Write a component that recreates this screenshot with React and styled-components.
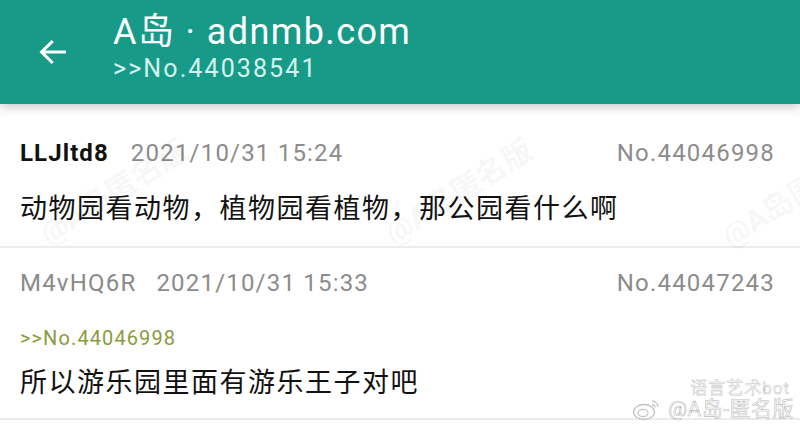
import React from "react";
import styled, { createGlobalStyle } from "styled-components";

const GlobalStyle = createGlobalStyle`
  html, body {
    margin: 0;
    padding: 0;
    background: #ffffff;
  }
  body {
    font-family: Roboto, "Noto Sans CJK SC", sans-serif;
    overflow: hidden;
  }
`;

const posts = [
  {
    id: "44046998",
    user: "LLJltd8",
    bold: true,
    time: "2021/10/31 15:24",
    text: "动物园看动物，植物园看植物，那公园看什么啊",
  },
  {
    id: "44047243",
    user: "M4vHQ6R",
    bold: false,
    time: "2021/10/31 15:33",
    quote: "44046998",
    text: "所以游乐园里面有游乐王子对吧",
  },
];

const marks = [
  { left: 30, top: 215 },
  { left: 375, top: 215 },
  { left: 712, top: 218 },
];

function App() {
  return (
    <Page>
      <GlobalStyle />
      <TopBar>
        <BackButton>
          <svg width="34" height="34" viewBox="0 0 24 24" fill="none">
            <path
              d="M20 12H4.5M11 5l-7 7 7 7"
              stroke="#ffffff"
              strokeWidth="2.2"
              strokeLinecap="square"
            />
          </svg>
        </BackButton>
        <TitleBlock>
          <Title>A岛 · adnmb.com</Title>
          <Subtitle>&gt;&gt;No.44038541</Subtitle>
        </TitleBlock>
      </TopBar>
      <List>
        {posts.map((p) => (
          <Post key={p.id} $tall={!!p.quote}>
            <Meta>
              <User $bold={p.bold}>{p.user}</User>
              <Time>{p.time}</Time>
              <PostNo>No.{p.id}</PostNo>
            </Meta>
            {p.quote && <Quote>&gt;&gt;No.{p.quote}</Quote>}
            <Content $gap={p.quote ? 16 : 23}>{p.text}</Content>
          </Post>
        ))}
      </List>
      {marks.map((m, i) => (
        <Watermark key={i} style={{ left: m.left, top: m.top }}>
          @A岛匿名版
        </Watermark>
      ))}
      <Stamp>
        <StampSmall>语言艺术bot</StampSmall>
        <StampRow>
          <svg width="30" height="24" viewBox="0 0 30 24" fill="none">
            <ellipse cx="12" cy="15" rx="10.5" ry="7.5" stroke="#c4c4c4" strokeWidth="1.3" />
            <ellipse cx="11" cy="16" rx="5" ry="3.6" stroke="#c4c4c4" strokeWidth="1.2" />
            <path d="M20 4c3 0 6 3 6 6M20 7.5c1.5 0 3 1.5 3 3" stroke="#c4c4c4" strokeWidth="1.3" />
          </svg>
          <StampText>@A岛-匿名版</StampText>
        </StampRow>
      </Stamp>
    </Page>
  );
}

const Page = styled.div`
  position: relative;
  width: 800px;
  height: 433px;
  overflow: hidden;
  background: #ffffff;
`;

const TopBar = styled.header`
  display: flex;
  align-items: center;
  height: 104px;
  padding-left: 36px;
  background: #179b88;
  box-shadow: 0 3px 10px rgba(0, 0, 0, 0.22);
  position: relative;
  z-index: 1;
`;

const BackButton = styled.div`
  display: flex;
  align-items: center;
  width: 40px;
  height: 40px;
  margin-right: 37px;
`;

const TitleBlock = styled.div`
  display: flex;
  flex-direction: column;
  margin-top: -8px;
`;

const Title = styled.div`
  color: #ffffff;
  font-size: 36px;
  letter-spacing: 1.4px;
  line-height: 40px;
`;

const Subtitle = styled.div`
  color: #d6f3ee;
  font-size: 25px;
  letter-spacing: 2.1px;
  line-height: 30px;
  margin-top: 2px;
`;

const List = styled.div`
  display: flex;
  flex-direction: column;
  padding-top: 14px;
`;

const Post = styled.div`
  display: flex;
  flex-direction: column;
  padding: 20px 25px 0 20px;
  height: ${({ $tall }) => ($tall ? "172px" : "130px")};
  box-sizing: border-box;
  border-bottom: 2px solid #ececec;
`;

const Meta = styled.div`
  display: flex;
  align-items: baseline;
  font-size: 24px;
  line-height: 30px;
  letter-spacing: 1.2px;
`;

const User = styled.span`
  color: ${({ $bold }) => ($bold ? "#111111" : "#8a8a8a")};
  font-weight: ${({ $bold }) => ($bold ? 700 : 400)};
  letter-spacing: ${({ $bold }) => ($bold ? "1.1px" : "1.2px")};
  margin-right: ${({ $bold }) => ($bold ? "22px" : "20px")};
`;

const Time = styled.span`
  color: #8c8c8c;
`;

const PostNo = styled.span`
  color: #8c8c8c;
  margin-left: auto;
`;

const Quote = styled.div`
  color: #8a9a3e;
  font-size: 20px;
  letter-spacing: 1.1px;
  line-height: 22px;
  margin-top: 29px;
`;

const Content = styled.div`
  color: #111111;
  font-size: 27px;
  letter-spacing: 1.5px;
  line-height: 36px;
  margin-top: ${({ $gap }) => $gap}px;
`;

const Watermark = styled.div`
  position: absolute;
  font-size: 30px;
  font-weight: 700;
  color: rgba(0, 0, 0, 0.05);
  transform: rotate(-32deg);
  transform-origin: left top;
  white-space: nowrap;
  pointer-events: none;
`;

const Stamp = styled.div`
  position: absolute;
  right: 6px;
  bottom: 12px;
  display: flex;
  flex-direction: column;
  align-items: flex-end;
  pointer-events: none;
`;

const StampSmall = styled.div`
  font-size: 17px;
  line-height: 18px;
  color: #ffffff;
  -webkit-text-stroke: 0.5px #c2c2c2;
  letter-spacing: 1px;
  margin-right: 4px;
`;

const StampRow = styled.div`
  display: flex;
  align-items: center;
  gap: 6px;
`;

const StampText = styled.div`
  font-size: 21px;
  line-height: 24px;
  color: #ffffff;
  -webkit-text-stroke: 0.6px #bdbdbd;
  letter-spacing: 0.5px;
`;

export default App;
